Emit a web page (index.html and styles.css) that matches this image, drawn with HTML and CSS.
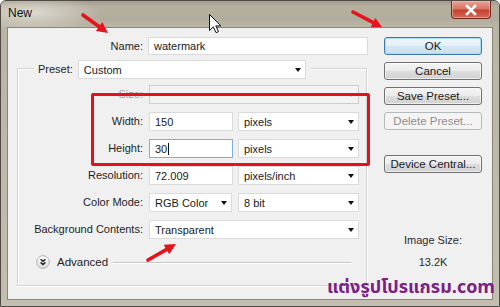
FILE: index.html
```html
<!DOCTYPE html>
<html>
<head>
<meta charset="utf-8">
<title>New</title>
<link rel="stylesheet" href="styles.css">
</head>
<body>
<div class="window">
  <div class="titlebar">
    <span class="title">New</span>
    <div class="close">
      <svg width="14" height="12" viewBox="0 0 14 12"><path d="M3 2 L11 10 M11 2 L3 10" stroke="#fff" stroke-width="2.6" stroke-linecap="square"/></svg>
    </div>
  </div>
  <div class="client">
    <div class="left">
      <div class="name-row">
        <span class="lbl name-lbl">Name:</span>
        <div class="field name-field">watermark</div>
      </div>
      <div class="group">
        <div class="preset-row">
          <span class="preset-lbl">Preset:</span>
          <div class="field select preset-field">Custom<span class="arrow"></span></div>
        </div>
        <div class="rows">
          <span class="lbl disabled">Size:</span>
          <div class="field select span2 field-disabled"><span class="arrow grey"></span></div>

          <span class="lbl">Width:</span>
          <div class="field">150</div>
          <div class="field select">pixels<span class="arrow"></span></div>

          <span class="lbl">Height:</span>
          <div class="field focused">30<span class="caret"></span></div>
          <div class="field select">pixels<span class="arrow"></span></div>

          <span class="lbl">Resolution:</span>
          <div class="field">72.009</div>
          <div class="field select">pixels/inch<span class="arrow"></span></div>

          <span class="lbl">Color Mode:</span>
          <div class="field select rgb">RGB Color<span class="arrow"></span></div>
          <div class="field select">8 bit<span class="arrow"></span></div>

          <span class="lbl">Background Contents:</span>
          <div class="field select span2">Transparent<span class="arrow"></span></div>
        </div>
        <div class="advanced">
          <svg class="adv-icon" width="14" height="14" viewBox="0 0 14 14">
            <defs>
              <linearGradient id="ag" x1="0" y1="0" x2="0" y2="1">
                <stop offset="0" stop-color="#ffffff"/>
                <stop offset="1" stop-color="#dcdcdc"/>
              </linearGradient>
            </defs>
            <circle cx="7" cy="7" r="6.3" fill="url(#ag)" stroke="#a9a9a9" stroke-width="0.9"/>
            <path d="M4.6 4.3 L7 6.4 L9.4 4.3 M4.6 7.4 L7 9.5 L9.4 7.4" fill="none" stroke="#222" stroke-width="1.4"/>
          </svg>
          <span class="adv-text">Advanced</span>
          <span class="adv-line"></span>
        </div>
      </div>
    </div>
    <div class="right">
      <div class="btn default">OK</div>
      <div class="btn">Cancel</div>
      <div class="btn">Save Preset...</div>
      <div class="btn btn-disabled">Delete Preset...</div>
      <div class="btn device">Device Central...</div>
      <div class="img-size">Image Size:</div>
      <div class="img-value">13.2K</div>
    </div>
  </div>
</div>

<div class="highlight"></div>

<svg class="marks" width="500" height="307" viewBox="0 0 500 307">
  <g stroke="#e5141c" stroke-width="3.6" stroke-linecap="round" fill="#e5141c">
    <line x1="83" y1="15" x2="100.7" y2="27.8"/>
    <polygon stroke="none" points="108,33 95.9,31.1 102.3,22.1"/>
    <line x1="353" y1="12" x2="374.8" y2="23.3"/>
    <polygon stroke="none" points="382,27 370.8,26.9 375.4,18"/>
    <line x1="148" y1="260" x2="168" y2="248.6"/>
    <polygon stroke="none" points="176,244 169.2,254.2 163.7,244.7"/>
  </g>
  <path transform="translate(209.5 14.5)" d="M0 0 L0 16 L3.8 12.4 L6.6 18.2 L9 17.1 L6.3 11.4 L11.3 11.4 Z" fill="#fff" stroke="#111" stroke-width="1" stroke-linejoin="round"/>
</svg>

<div class="watermark">แต่งรูปโปรแกรม.com</div>
</body>
</html>
```

FILE: styles.css
```css
html, body {
  margin: 0;
  padding: 0;
}

body {
  position: relative;
  width: 500px;
  height: 307px;
  overflow: hidden;
  font-family: "Liberation Sans", Arial, sans-serif;
  font-size: 11px;
  color: #1e1e1e;
  background: #ffffff;
}

.window {
  width: 500px;
  height: 307px;
  box-sizing: border-box;
  border: 1px solid #4f4b42;
  border-radius: 6px 6px 0 0;
  background: linear-gradient(to bottom, #b9b3a4, #c4beb0);
  display: flex;
  flex-direction: column;
}

.titlebar {
  height: 26px;
  display: flex;
  align-items: flex-start;
  background:
    radial-gradient(ellipse 70px 18px at 30px 12px, rgba(236, 233, 225, 0.75), rgba(236, 233, 225, 0) 100%),
    linear-gradient(to bottom, #a29d8e 0px, #b6b0a1 6px, #b2ac9d 18px, #bdb7a8 26px);
  border-radius: 5px 5px 0 0;
}

.title {
  margin-left: 7px;
  margin-top: 5px;
  font-size: 12px;
  color: #111;
  line-height: 15px;
}

.close {
  margin-left: auto;
  margin-right: 8px;
  width: 40px;
  height: 18px;
  box-sizing: border-box;
  border: 1px solid #6e2a22;
  border-top: none;
  border-radius: 0 0 4px 4px;
  background: linear-gradient(to bottom, #e7a397 0%, #d77565 45%, #c4412f 55%, #d66a58 100%);
  display: flex;
  align-items: center;
  justify-content: center;
  box-shadow: inset 0 0 0 1px rgba(255, 210, 200, 0.45);
}

.client {
  margin: 0 6px;
  height: 273px;
  box-sizing: border-box;
  border: 1px solid #8a8477;
  background: #f0f0f0;
  display: flex;
}

.left {
  width: 365px;
  padding-top: 9px;
}

.name-row {
  display: flex;
  align-items: center;
  height: 18px;
}

.name-lbl {
  width: 135px;
  margin-right: 5px;
}

.lbl {
  text-align: right;
  white-space: nowrap;
  line-height: 19px;
}

.lbl.disabled {
  color: #a3a3a3;
}

.field {
  box-sizing: border-box;
  height: 19px;
  background: #ffffff;
  border: 1px solid #dadada;
  padding: 0 4px 0 5px;
  display: flex;
  align-items: center;
  white-space: nowrap;
  color: #1a1a1a;
}

.name-field {
  width: 220px;
  height: 18px;
}

.select .arrow {
  margin-left: auto;
  width: 0;
  height: 0;
  border-left: 3.5px solid transparent;
  border-right: 3.5px solid transparent;
  border-top: 4px solid #111;
}

.select .arrow.grey {
  border-top-color: #b4b4b4;
}

.field-disabled {
  background: #f3f3f3;
  border-color: #cdcdcd;
}

.focused {
  border-color: #78b0e6;
}

.caret {
  width: 1px;
  height: 12px;
  background: #111;
  margin-left: 1px;
}

.group {
  margin-top: 13px;
  margin-left: 9px;
  width: 350px;
  box-sizing: border-box;
  border: 1px solid #d3d3d3;
  box-shadow: 1px 1px 0 #ffffff, inset 1px 1px 0 #ffffff;
  padding-bottom: 16px;
}

.preset-row {
  margin-top: -9px;
  margin-left: 16px;
  width: fit-content;
  display: flex;
  align-items: center;
  padding: 0 5px 0 4px;
  background: #f0f0f0;
}

.preset-lbl {
  margin-right: 5px;
  line-height: 19px;
}

.preset-field {
  width: 228px;
}

.rows {
  margin-top: 6px;
  display: grid;
  grid-template-columns: 125px 85px 121px;
  grid-auto-rows: 19px;
  column-gap: 5px;
  row-gap: 8px;
}

.rows .lbl + .field {
  margin-left: 1px;
}

.span2 {
  grid-column: 2 / 4;
}

.rgb {
  width: 83px;
}

.advanced {
  margin-top: 16px;
  margin-left: 18px;
  margin-right: 15px;
  height: 14px;
  display: flex;
  align-items: center;
}

.adv-icon {
  flex: none;
}

.adv-text {
  margin-left: 7px;
  font-size: 11.5px;
  color: #1e1e1e;
}

.adv-line {
  flex: 1;
  margin-left: 5px;
  height: 1px;
  background: #c8c8c8;
  box-shadow: 0 1px 0 #ffffff;
}

.right {
  padding-top: 9px;
  padding-left: 11px;
  width: 98px;
  display: flex;
  flex-direction: column;
}

.btn {
  box-sizing: border-box;
  height: 18px;
  margin-bottom: 7px;
  border: 1px solid #707070;
  border-radius: 3px;
  background: linear-gradient(to bottom, #f4f4f4 0%, #ebebeb 48%, #dddddd 52%, #d1d1d1 100%);
  box-shadow: inset 0 0 0 1px rgba(255, 255, 255, 0.6);
  display: flex;
  align-items: center;
  justify-content: center;
  color: #1a1a1a;
  font-size: 11.5px;
}

.btn.default {
  border-color: #3d7bad;
  box-shadow: inset 0 0 0 1px #a6dcf6;
  background: linear-gradient(to bottom, #f1f7fb 0%, #e3eff7 48%, #d3e6f2 52%, #c9e0ee 100%);
}

.btn.btn-disabled {
  border-color: #b5b9bc;
  background: #f4f4f4;
  color: #8f8f8f;
  box-shadow: none;
}

.btn.device {
  margin-top: 18px;
}

.img-size {
  margin-top: 53px;
  text-align: center;
  line-height: 14px;
  color: #2a2a2a;
}

.img-value {
  margin-top: 8px;
  text-align: center;
  line-height: 14px;
  color: #2a2a2a;
}

.highlight {
  position: absolute;
  left: 91px;
  top: 93px;
  width: 279px;
  height: 73px;
  box-sizing: border-box;
  border: 3px solid #e6101a;
  border-radius: 2px;
}

.marks {
  position: absolute;
  left: 0;
  top: 0;
}

.watermark {
  position: absolute;
  right: 5px;
  top: 277px;
  font-family: "Noto Sans Thai", "Tahoma", "DejaVu Sans", sans-serif;
  font-weight: bold;
  font-size: 18px;
  line-height: 22px;
  color: #7b2185;
  white-space: nowrap;
}
```
